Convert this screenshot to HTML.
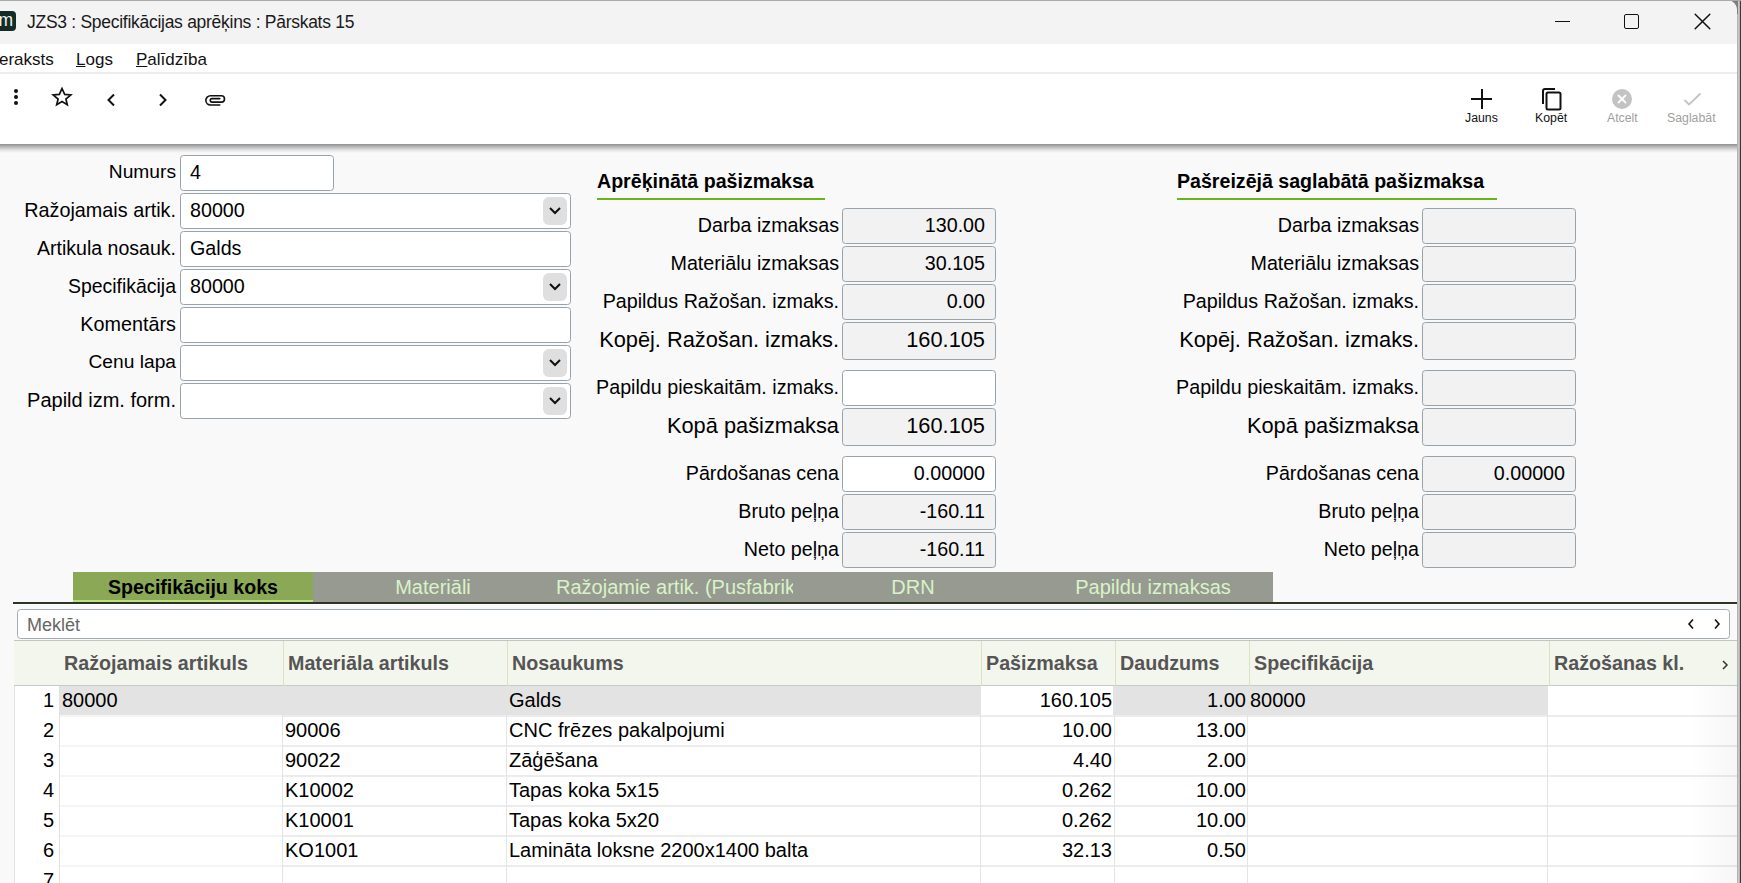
<!DOCTYPE html>
<html><head><meta charset="utf-8">
<style>
*{margin:0;padding:0;box-sizing:border-box}
html,body{width:1741px;height:883px;overflow:hidden;background:#888}
body{font-family:"Liberation Sans",sans-serif;color:#000;position:relative}
.a{position:absolute;white-space:nowrap}
#win{position:absolute;left:0;top:0;width:1737px;height:883px;background:#f9f9f9;border-top-right-radius:10px;overflow:hidden}
.lbl{position:absolute;text-align:right;font-size:19.7px;white-space:nowrap;line-height:22px}
.inp{position:absolute;background:#fff;border:1px solid #97a2aa;border-radius:3.5px;font-size:19.7px;white-space:nowrap;line-height:22px}
.ro{background:#f2f2f2}
.dd{position:absolute;width:24px;height:28px;background:#dfdfdf;border-radius:6px}
.hd{position:absolute;font-weight:bold;font-size:19.6px;white-space:nowrap;line-height:22px}
.gl{position:absolute;height:2px;background:#6bb51a}
.tab{position:absolute;top:0;height:29px;font-size:20px;line-height:29px;text-align:center;white-space:nowrap;overflow:hidden;color:#d9f2c9}
.th{position:absolute;top:0;height:45px;font-weight:bold;font-size:19.7px;line-height:45px;color:#555;white-space:nowrap;padding-left:0}
.cs{position:absolute;top:0;width:1px;height:45px;background:#d6e3bf}
.td{position:absolute;font-size:20px;line-height:28px;white-space:nowrap}
</style></head><body>

<div class="a" style="left:1737px;top:0;width:3px;height:883px;background:linear-gradient(90deg,#a9a9a9,#c9c9c9 50%,#a9a9a9)"></div>
<div class="a" style="left:1740px;top:0;width:1px;height:883px;background:#3a3a3a"></div>
<div class="a" style="left:1720px;top:0;width:18px;height:14px;background:#7d7d7d"></div>
<div id="win">
<div class="a" style="left:0;top:1px;width:1737px;height:43px;background:#f3f3f3"></div>
<div class="a" style="left:-6px;top:11px;width:21.6px;height:19.6px;background:#142c27;border-radius:4px"></div>
<div class="a" style="left:-1.5px;top:10px;font-size:17.5px;line-height:20px;color:#f4f4f4">m</div>
<div class="a" style="left:27px;top:12px;font-size:17.5px;letter-spacing:-0.28px;line-height:20px;color:#1a1a1a">JZS3 : Specifikācijas aprēķins : Pārskats 15</div>
<div class="a" style="left:1555px;top:21px;width:15px;height:1px;background:#111"></div>
<div class="a" style="left:1624px;top:14px;width:15px;height:15px;border:1.3px solid #111;border-radius:2px"></div>
<svg class="a" style="left:1694px;top:13px" width="17" height="17" viewBox="0 0 17 17"><path d="M1.2 1.2L15.8 15.8M15.8 1.2L1.2 15.8" stroke="#111" stroke-width="1.5" stroke-linecap="round"/></svg>
<div class="a" style="left:0;top:44px;width:1737px;height:28px;background:#fff"></div>
<div class="a" style="left:-1px;top:50px;font-size:17px;line-height:20px;color:#111">eraksts</div>
<div class="a" style="left:76px;top:50px;font-size:17px;line-height:20px;color:#111"><u>L</u>ogs</div>
<div class="a" style="left:136px;top:50px;font-size:17px;line-height:20px;color:#111"><u>P</u>alīdzība</div>
<div class="a" style="left:0;top:72px;width:1737px;height:2px;background:#ececec"></div>
<div class="a" style="left:0;top:74px;width:1737px;height:70px;background:#fff"></div>
<div class="a" style="left:0;top:144px;width:1737px;height:9px;background:linear-gradient(#8f8f8f,#bcbcbc 35%,#e6e6e6 70%,#f9f9f9)"></div>
<div class="a" style="left:14px;top:89px;width:4px;height:4px;border-radius:2px;background:#111"></div>
<div class="a" style="left:14px;top:95px;width:4px;height:4px;border-radius:2px;background:#111"></div>
<div class="a" style="left:14px;top:101px;width:4px;height:4px;border-radius:2px;background:#111"></div>
<svg class="a" style="left:46px;top:82px" width="32" height="30" viewBox="0 0 32 30"><path d="M16 6.6L18.7 12.4L24.8 12.9L19.9 17L21.3 22.8L16 19.6L10.7 22.8L12.1 17L7.2 12.9L13.3 12.4Z" fill="none" stroke="#111" stroke-width="1.7" stroke-linejoin="miter"/></svg>
<svg class="a" style="left:105px;top:93px" width="12" height="14" viewBox="0 0 12 14"><path d="M9 1.5L3.5 7L9 12.5" fill="none" stroke="#111" stroke-width="2"/></svg>
<svg class="a" style="left:157px;top:93px" width="12" height="14" viewBox="0 0 12 14"><path d="M3 1.5L8.5 7L3 12.5" fill="none" stroke="#111" stroke-width="2"/></svg>
<svg class="a" style="left:200px;top:88px" width="30" height="24" viewBox="0 0 30 24"><path d="M19.8 17H10.5A4.65 4.65 0 0 1 10.5 7.7H21.3A3.2 3.2 0 0 1 21.3 14.1H12A1.75 1.75 0 0 1 12 10.6H19.8" fill="none" stroke="#111" stroke-width="1.6" stroke-linecap="round"/></svg>
<div class="a" style="left:1471px;top:98px;width:21px;height:2px;background:#111"></div>
<div class="a" style="left:1481px;top:89px;width:2px;height:20px;background:#111"></div>
<div class="a" style="left:1465px;top:111px;font-size:12.3px;line-height:14px;color:#111">Jauns</div>
<svg class="a" style="left:1541px;top:87px" width="22" height="24" viewBox="0 0 22 24"><path d="M2 17V4A2 2 0 0 1 4 2H14" fill="none" stroke="#111" stroke-width="2"/><rect x="5.5" y="5.5" width="14" height="17" rx="1.5" fill="none" stroke="#111" stroke-width="2"/></svg>
<div class="a" style="left:1535px;top:111px;font-size:12.3px;line-height:14px;color:#111">Kopēt</div>
<svg class="a" style="left:1611px;top:88px" width="22" height="22" viewBox="0 0 22 22"><circle cx="11" cy="11" r="10" fill="#c3c3c3"/><path d="M7 7L15 15M15 7L7 15" stroke="#fff" stroke-width="1.8"/></svg>
<div class="a" style="left:1607px;top:111px;font-size:12.3px;line-height:14px;color:#a0a0a0">Atcelt</div>
<svg class="a" style="left:1683px;top:92px" width="19" height="15" viewBox="0 0 19 15"><path d="M1.5 8L6 12.5L17.5 1.5" fill="none" stroke="#c3c3c3" stroke-width="1.8"/></svg>
<div class="a" style="left:1667px;top:111px;font-size:12.3px;line-height:14px;color:#a0a0a0">Saglabāt</div>
<div class="lbl" style="right:1561px;top:161px;font-size:19.2px">Numurs</div>
<div class="inp" style="left:180px;top:155px;width:154px;height:36px;padding:5px 0 0 9px">4</div>
<div class="lbl" style="right:1561px;top:199px;font-size:19.8px">Ražojamais artik.</div>
<div class="inp" style="left:180px;top:193px;width:391px;height:36px;padding:5px 0 0 9px">80000</div>
<div class="dd" style="left:543px;top:197px"></div>
<svg class="a" style="left:548px;top:206px" width="14" height="10" viewBox="0 0 14 10"><path d="M2 2L7 7L12 2" fill="none" stroke="#111" stroke-width="2"/></svg>
<div class="lbl" style="right:1561px;top:237px;font-size:19.55px">Artikula nosauk.</div>
<div class="inp" style="left:180px;top:231px;width:391px;height:36px;padding:5px 0 0 9px">Galds</div>
<div class="lbl" style="right:1561px;top:275px;font-size:19.45px">Specifikācija</div>
<div class="inp" style="left:180px;top:269px;width:391px;height:36px;padding:5px 0 0 9px">80000</div>
<div class="dd" style="left:543px;top:273px"></div>
<svg class="a" style="left:548px;top:282px" width="14" height="10" viewBox="0 0 14 10"><path d="M2 2L7 7L12 2" fill="none" stroke="#111" stroke-width="2"/></svg>
<div class="lbl" style="right:1561px;top:313px;font-size:19.8px">Komentārs</div>
<div class="inp" style="left:180px;top:307px;width:391px;height:36px;padding:5px 0 0 9px"></div>
<div class="lbl" style="right:1561px;top:351px;font-size:19.2px">Cenu lapa</div>
<div class="inp" style="left:180px;top:345px;width:391px;height:36px;padding:5px 0 0 9px"></div>
<div class="dd" style="left:543px;top:349px"></div>
<svg class="a" style="left:548px;top:358px" width="14" height="10" viewBox="0 0 14 10"><path d="M2 2L7 7L12 2" fill="none" stroke="#111" stroke-width="2"/></svg>
<div class="lbl" style="right:1561px;top:389px;font-size:20px">Papild izm. form.</div>
<div class="inp" style="left:180px;top:383px;width:391px;height:36px;padding:5px 0 0 9px"></div>
<div class="dd" style="left:543px;top:387px"></div>
<svg class="a" style="left:548px;top:396px" width="14" height="10" viewBox="0 0 14 10"><path d="M2 2L7 7L12 2" fill="none" stroke="#111" stroke-width="2"/></svg>
<div class="hd" style="left:597px;top:170px">Aprēķinātā pašizmaksa</div>
<div class="gl" style="left:597px;top:198px;width:228px"></div>
<div class="lbl" style="right:898px;top:214px;font-size:19.7px">Darba izmaksas</div>
<div class="inp ro" style="left:842px;top:208px;width:154px;height:36px;text-align:right;padding:5px 10px 0 0;font-size:19.7px">130.00</div>
<div class="lbl" style="right:898px;top:252px;font-size:19.7px">Materiālu izmaksas</div>
<div class="inp ro" style="left:842px;top:246px;width:154px;height:36px;text-align:right;padding:5px 10px 0 0;font-size:19.7px">30.105</div>
<div class="lbl" style="right:898px;top:290px;font-size:19.7px">Papildus Ražošan. izmaks.</div>
<div class="inp ro" style="left:842px;top:284px;width:154px;height:36px;text-align:right;padding:5px 10px 0 0;font-size:19.7px">0.00</div>
<div class="lbl" style="right:898px;top:329px;font-size:21.8px">Kopēj. Ražošan. izmaks.</div>
<div class="inp ro" style="left:842px;top:322px;width:154px;height:38px;text-align:right;padding:6px 10px 0 0;font-size:21.8px">160.105</div>
<div class="lbl" style="right:898px;top:376px;font-size:19.7px">Papildu pieskaitām. izmaks.</div>
<div class="inp" style="left:842px;top:370px;width:154px;height:36px;text-align:right;padding:5px 10px 0 0;font-size:19.7px"></div>
<div class="lbl" style="right:898px;top:415px;font-size:21.8px">Kopā pašizmaksa</div>
<div class="inp ro" style="left:842px;top:408px;width:154px;height:38px;text-align:right;padding:6px 10px 0 0;font-size:21.8px">160.105</div>
<div class="lbl" style="right:898px;top:462px;font-size:19.7px">Pārdošanas cena</div>
<div class="inp" style="left:842px;top:456px;width:154px;height:36px;text-align:right;padding:5px 10px 0 0;font-size:19.7px">0.00000</div>
<div class="lbl" style="right:898px;top:500px;font-size:19.7px">Bruto peļņa</div>
<div class="inp ro" style="left:842px;top:494px;width:154px;height:36px;text-align:right;padding:5px 10px 0 0;font-size:19.7px">-160.11</div>
<div class="lbl" style="right:898px;top:538px;font-size:19.7px">Neto peļņa</div>
<div class="inp ro" style="left:842px;top:532px;width:154px;height:36px;text-align:right;padding:5px 10px 0 0;font-size:19.7px">-160.11</div>
<div class="hd" style="left:1177px;top:170px">Pašreizējā saglabātā pašizmaksa</div>
<div class="gl" style="left:1177px;top:198px;width:320px"></div>
<div class="lbl" style="right:318px;top:214px;font-size:19.7px">Darba izmaksas</div>
<div class="inp ro" style="left:1422px;top:208px;width:154px;height:36px;text-align:right;padding:5px 10px 0 0;font-size:19.7px"></div>
<div class="lbl" style="right:318px;top:252px;font-size:19.7px">Materiālu izmaksas</div>
<div class="inp ro" style="left:1422px;top:246px;width:154px;height:36px;text-align:right;padding:5px 10px 0 0;font-size:19.7px"></div>
<div class="lbl" style="right:318px;top:290px;font-size:19.7px">Papildus Ražošan. izmaks.</div>
<div class="inp ro" style="left:1422px;top:284px;width:154px;height:36px;text-align:right;padding:5px 10px 0 0;font-size:19.7px"></div>
<div class="lbl" style="right:318px;top:329px;font-size:21.8px">Kopēj. Ražošan. izmaks.</div>
<div class="inp ro" style="left:1422px;top:322px;width:154px;height:38px;text-align:right;padding:6px 10px 0 0;font-size:21.8px"></div>
<div class="lbl" style="right:318px;top:376px;font-size:19.7px">Papildu pieskaitām. izmaks.</div>
<div class="inp ro" style="left:1422px;top:370px;width:154px;height:36px;text-align:right;padding:5px 10px 0 0;font-size:19.7px"></div>
<div class="lbl" style="right:318px;top:415px;font-size:21.8px">Kopā pašizmaksa</div>
<div class="inp ro" style="left:1422px;top:408px;width:154px;height:38px;text-align:right;padding:6px 10px 0 0;font-size:21.8px"></div>
<div class="lbl" style="right:318px;top:462px;font-size:19.7px">Pārdošanas cena</div>
<div class="inp ro" style="left:1422px;top:456px;width:154px;height:36px;text-align:right;padding:5px 10px 0 0;font-size:19.7px">0.00000</div>
<div class="lbl" style="right:318px;top:500px;font-size:19.7px">Bruto peļņa</div>
<div class="inp ro" style="left:1422px;top:494px;width:154px;height:36px;text-align:right;padding:5px 10px 0 0;font-size:19.7px"></div>
<div class="lbl" style="right:318px;top:538px;font-size:19.7px">Neto peļņa</div>
<div class="inp ro" style="left:1422px;top:532px;width:154px;height:36px;text-align:right;padding:5px 10px 0 0;font-size:19.7px"></div>
<div class="a" style="left:73px;top:572px;width:1200px;height:30px;background:#979a90;overflow:hidden">
<div class="a" style="left:0;top:0;width:240px;height:30px;background:#8aa856"></div>
<div class="a" style="left:0;top:28px;width:240px;height:2px;background:#bddf7f"></div>
<div class="tab" style="left:0;top:1px;width:240px;color:#000;font-weight:bold;font-size:19.6px">Specifikāciju koks</div>
<div class="tab" style="left:240px;top:1px;width:240px">Materiāli</div>
<div class="tab" style="left:480px;top:1px;width:240px;text-align:left;padding-left:3px">Ražojamie artik. (Pusfabrikāti)</div>
<div class="tab" style="left:720px;top:1px;width:240px">DRN</div>
<div class="tab" style="left:960px;top:1px;width:240px">Papildu izmaksas</div>
</div>
<div class="a" style="left:13px;top:602px;width:1724px;height:2px;background:#2b3524"></div>
<div class="a" style="left:13px;top:604px;width:1724px;height:1px;background:#fdfdfd"></div>
<div class="inp" style="left:17px;top:609px;width:1713px;height:30px;border-color:#a3acb3;padding:4px 0 0 9px;font-size:18px;color:#666">Meklēt</div>
<svg class="a" style="left:1686px;top:618px" width="10" height="12" viewBox="0 0 10 12"><path d="M7 1.5L3 6L7 10.5" fill="none" stroke="#111" stroke-width="1.6"/></svg>
<svg class="a" style="left:1712px;top:618px" width="10" height="12" viewBox="0 0 10 12"><path d="M3 1.5L7 6L3 10.5" fill="none" stroke="#111" stroke-width="1.6"/></svg>
<div class="a" style="left:14px;top:640px;width:1723px;height:46px;background:#f3f6ec;border-bottom:1px solid #c8c8c8;border-top:1px solid #c4c4c4"></div>
<div class="th" style="left:64px;top:641px">Ražojamais artikuls</div>
<div class="th" style="left:288px;top:641px">Materiāla artikuls</div>
<div class="cs" style="left:283px;top:641px"></div>
<div class="th" style="left:512px;top:641px">Nosaukums</div>
<div class="cs" style="left:507px;top:641px"></div>
<div class="th" style="left:986px;top:641px">Pašizmaksa</div>
<div class="cs" style="left:981px;top:641px"></div>
<div class="th" style="left:1120px;top:641px">Daudzums</div>
<div class="cs" style="left:1115px;top:641px"></div>
<div class="th" style="left:1254px;top:641px">Specifikācija</div>
<div class="cs" style="left:1249px;top:641px"></div>
<div class="th" style="left:1554px;top:641px">Ražošanas kl.</div>
<div class="cs" style="left:1549px;top:641px"></div>
<svg class="a" style="left:1721px;top:659px" width="8" height="12" viewBox="0 0 8 12"><path d="M2 2L6 6L2 10" fill="none" stroke="#333" stroke-width="1.5"/></svg>
<div class="a" style="left:14px;top:686px;width:1723px;height:200px;background:#fff;border-left:1px solid #e3e3e3"></div>
<div class="a" style="left:59px;top:686px;width:1488px;height:29px;background:#e3e3e3"></div>
<div class="a" style="left:981px;top:686px;width:132px;height:29px;background:#fff"></div>
<div class="a" style="left:59px;top:715px;width:224px;height:2px;background:#f5f5f5"></div>
<div class="a" style="left:283px;top:715px;width:1454px;height:2px;background:#ececec"></div>
<div class="td" style="left:14px;top:686px;width:40px;text-align:right">1</div>
<div class="td" style="left:62px;top:686px">80000</div>
<div class="td" style="left:285px;top:686px"></div>
<div class="td" style="left:509px;top:686px">Galds</div>
<div class="td" style="right:625px;top:686px">160.105</div>
<div class="td" style="right:491px;top:686px">1.00</div>
<div class="td" style="left:1250px;top:686px">80000</div>
<div class="a" style="left:59px;top:745px;width:224px;height:2px;background:#f5f5f5"></div>
<div class="a" style="left:283px;top:745px;width:1454px;height:2px;background:#ececec"></div>
<div class="td" style="left:14px;top:716px;width:40px;text-align:right">2</div>
<div class="td" style="left:62px;top:716px"></div>
<div class="td" style="left:285px;top:716px">90006</div>
<div class="td" style="left:509px;top:716px">CNC frēzes pakalpojumi</div>
<div class="td" style="right:625px;top:716px">10.00</div>
<div class="td" style="right:491px;top:716px">13.00</div>
<div class="td" style="left:1250px;top:716px"></div>
<div class="a" style="left:59px;top:775px;width:224px;height:2px;background:#f5f5f5"></div>
<div class="a" style="left:283px;top:775px;width:1454px;height:2px;background:#ececec"></div>
<div class="td" style="left:14px;top:746px;width:40px;text-align:right">3</div>
<div class="td" style="left:62px;top:746px"></div>
<div class="td" style="left:285px;top:746px">90022</div>
<div class="td" style="left:509px;top:746px">Zāģēšana</div>
<div class="td" style="right:625px;top:746px">4.40</div>
<div class="td" style="right:491px;top:746px">2.00</div>
<div class="td" style="left:1250px;top:746px"></div>
<div class="a" style="left:59px;top:805px;width:224px;height:2px;background:#f5f5f5"></div>
<div class="a" style="left:283px;top:805px;width:1454px;height:2px;background:#ececec"></div>
<div class="td" style="left:14px;top:776px;width:40px;text-align:right">4</div>
<div class="td" style="left:62px;top:776px"></div>
<div class="td" style="left:285px;top:776px">K10002</div>
<div class="td" style="left:509px;top:776px">Tapas koka 5x15</div>
<div class="td" style="right:625px;top:776px">0.262</div>
<div class="td" style="right:491px;top:776px">10.00</div>
<div class="td" style="left:1250px;top:776px"></div>
<div class="a" style="left:59px;top:835px;width:224px;height:2px;background:#f5f5f5"></div>
<div class="a" style="left:283px;top:835px;width:1454px;height:2px;background:#ececec"></div>
<div class="td" style="left:14px;top:806px;width:40px;text-align:right">5</div>
<div class="td" style="left:62px;top:806px"></div>
<div class="td" style="left:285px;top:806px">K10001</div>
<div class="td" style="left:509px;top:806px">Tapas koka 5x20</div>
<div class="td" style="right:625px;top:806px">0.262</div>
<div class="td" style="right:491px;top:806px">10.00</div>
<div class="td" style="left:1250px;top:806px"></div>
<div class="a" style="left:59px;top:865px;width:224px;height:2px;background:#f5f5f5"></div>
<div class="a" style="left:283px;top:865px;width:1454px;height:2px;background:#ececec"></div>
<div class="td" style="left:14px;top:836px;width:40px;text-align:right">6</div>
<div class="td" style="left:62px;top:836px"></div>
<div class="td" style="left:285px;top:836px">KO1001</div>
<div class="td" style="left:509px;top:836px">Lamināta loksne 2200x1400 balta</div>
<div class="td" style="right:625px;top:836px">32.13</div>
<div class="td" style="right:491px;top:836px">0.50</div>
<div class="td" style="left:1250px;top:836px"></div>
<div class="a" style="left:59px;top:895px;width:224px;height:2px;background:#f5f5f5"></div>
<div class="a" style="left:283px;top:895px;width:1454px;height:2px;background:#ececec"></div>
<div class="td" style="left:14px;top:866px;width:40px;text-align:right">7</div>
<div class="td" style="left:62px;top:866px"></div>
<div class="td" style="left:285px;top:866px"></div>
<div class="td" style="left:509px;top:866px"></div>
<div class="td" style="right:625px;top:866px"></div>
<div class="td" style="right:491px;top:866px"></div>
<div class="td" style="left:1250px;top:866px"></div>
<div class="a" style="left:59px;top:686px;width:1px;height:200px;background:#e0e0e0"></div>
<div class="a" style="left:282px;top:686px;width:1px;height:200px;background:#e4e4e4"></div>
<div class="a" style="left:506px;top:686px;width:1px;height:200px;background:#e4e4e4"></div>
<div class="a" style="left:980px;top:686px;width:1px;height:200px;background:#e4e4e4"></div>
<div class="a" style="left:1114px;top:686px;width:1px;height:200px;background:#e4e4e4"></div>
<div class="a" style="left:1247px;top:686px;width:1px;height:200px;background:#e4e4e4"></div>
<div class="a" style="left:1547px;top:686px;width:1px;height:200px;background:#e4e4e4"></div>
<div class="a" style="left:1690px;top:686px;width:47px;height:200px;background:linear-gradient(90deg,rgba(0,0,0,0),rgba(0,0,0,0.035))"></div>
</div>
<div class="a" style="left:0;top:0;width:1741px;height:1px;background:#a9a9a9"></div>
</body></html>
